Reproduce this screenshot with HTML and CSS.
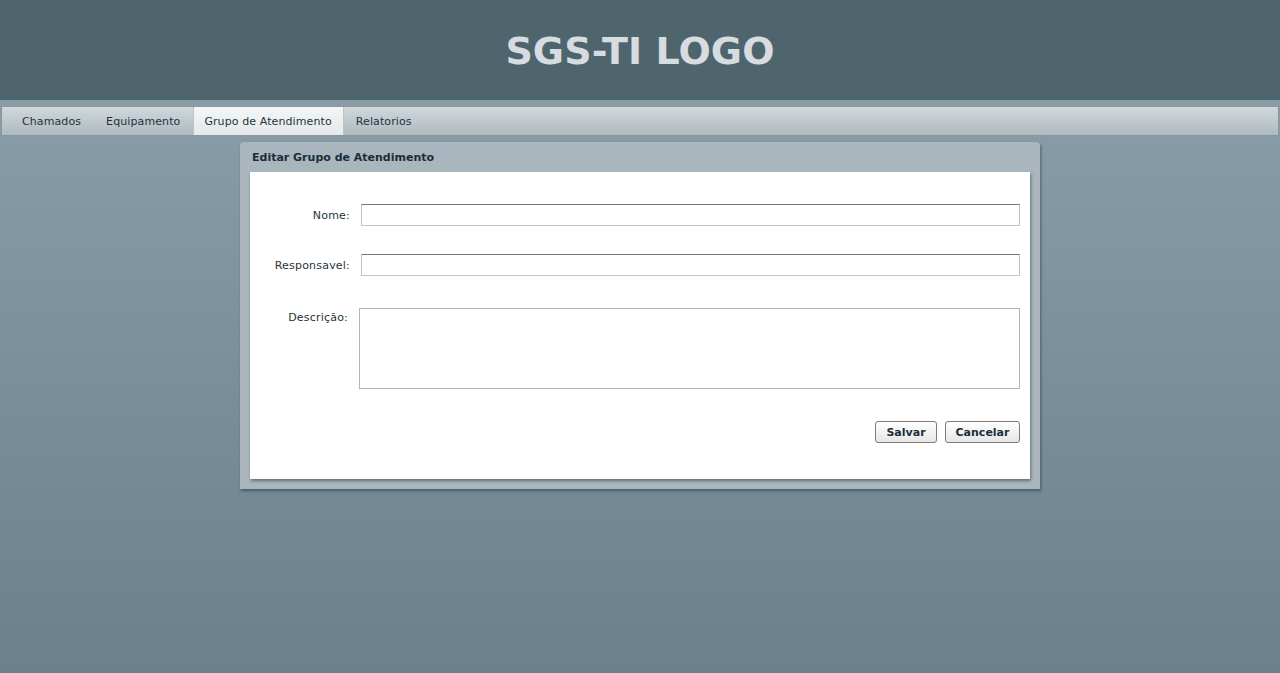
FILE: index.html
```html
<!DOCTYPE html>
<html>
<head>
<meta charset="utf-8">
<link rel="stylesheet" href="styles.css">
</head>
<body>
<header class="header"><h1 class="logo">SGS-TI LOGO</h1></header>
<nav class="menu">
  <a class="tab">Chamados</a>
  <a class="tab tab-equip">Equipamento</a>
  <a class="tab active">Grupo de Atendimento</a>
  <a class="tab">Relatorios</a>
</nav>
<main class="main">
  <section class="panel">
    <div class="panel-title">Editar Grupo de Atendimento</div>
    <div class="panel-body">
      <div class="row row-nome">
        <label class="label">Nome:</label>
        <div class="input"></div>
      </div>
      <div class="row row-resp">
        <label class="label">Responsavel:</label>
        <div class="input"></div>
      </div>
      <div class="row row-desc">
        <label class="label label-desc">Descrição:</label>
        <div class="textarea"></div>
      </div>
      <div class="actions">
        <button class="btn btn-save">Salvar</button>
        <button class="btn btn-cancel">Cancelar</button>
      </div>
    </div>
  </section>
</main>
</body>
</html>
```
FILE: styles.css
```css
html, body {
  margin: 0;
  padding: 0;
  height: 100%;
}
body {
  font-family: "DejaVu Sans", Verdana, sans-serif;
  background: linear-gradient(#8da2ac 0%, #7b919c 50%, #6a808b 100%);
  min-height: 673px;
}
.header {
  height: 100px;
  background: #4e656e;
  display: flex;
  align-items: center;
  justify-content: center;
}
.logo {
  margin: 0;
  font-size: 38px;
  font-weight: bold;
  color: #d6dce0;
  letter-spacing: 0.1px;
  transform: translateY(1px);
}
.menu {
  margin: 6px 1px 0 1px;
  height: 28px;
  border: 1px solid #8e9699;
  background: linear-gradient(#d2d8dc, #aeb9bf);
  display: flex;
  padding-left: 8px;
}
.tab {
  font-size: 11px;
  letter-spacing: 0.1px;
  color: #1f3440;
  padding: 0 12px;
  display: flex;
  align-items: center;
  height: 28px;
  box-sizing: border-box;
}
.tab-equip { padding: 0 13px 0 13px; }
.tab.active {
  background: linear-gradient(#f4f6f7, #e4e8ea);
  border-left: 1px solid #bcc5ca;
  border-right: 1px solid #bcc5ca;
  padding: 0 11px 0 10px;
}
.tab.active + .tab { padding-left: 12px; }
.main {
  display: flex;
  justify-content: center;
  padding-top: 6px;
}
.panel {
  width: 800px;
  background: #a9b6bd;
  border-radius: 4px 4px 0 0;
  box-shadow: 1px 2px 3px rgba(40, 55, 62, 0.55);
  padding: 0 10px 10px 10px;
  box-sizing: border-box;
}
.panel-title {
  height: 30px;
  line-height: 31px;
  font-size: 11px;
  font-weight: bold;
  color: #1a2e3a;
  padding-left: 2px;
}
.panel-body {
  background: #ffffff;
  height: 307px;
  box-shadow: 1px 2px 3px rgba(50, 65, 72, 0.6);
  box-sizing: border-box;
  padding-top: 32px;
}
.row {
  display: flex;
  align-items: center;
}
.label {
  width: 100px;
  text-align: right;
  font-size: 11px;
  color: #1f3440;
  letter-spacing: 0.2px;
}
.input {
  margin-left: 11px;
  width: 659px;
  height: 22px;
  box-sizing: border-box;
  border: 1px solid #c4c4c4;
  border-top-color: #767676;
}
.row-resp { margin-top: 28px; }
.row-desc {
  margin-top: 32px;
  align-items: flex-start;
}
.label-desc {
  width: 98px;
  margin-top: 3px;
}
.textarea {
  margin-left: 11px;
  width: 661px;
  height: 81px;
  box-sizing: border-box;
  border: 1px solid #b4b4b4;
}
.actions {
  display: flex;
  justify-content: flex-end;
  gap: 8px;
  margin-top: 32px;
  padding-right: 10px;
}
.btn {
  font-family: "DejaVu Sans", Verdana, sans-serif;
  font-size: 11px;
  font-weight: bold;
  color: #1a2e3a;
  height: 22px;
  border: 1px solid #7a7a7a;
  border-radius: 3px;
  background: linear-gradient(#ffffff, #e6e6e6);
  padding: 0;
}
.btn-save { width: 62px; }
.btn-cancel { width: 75px; }
```
